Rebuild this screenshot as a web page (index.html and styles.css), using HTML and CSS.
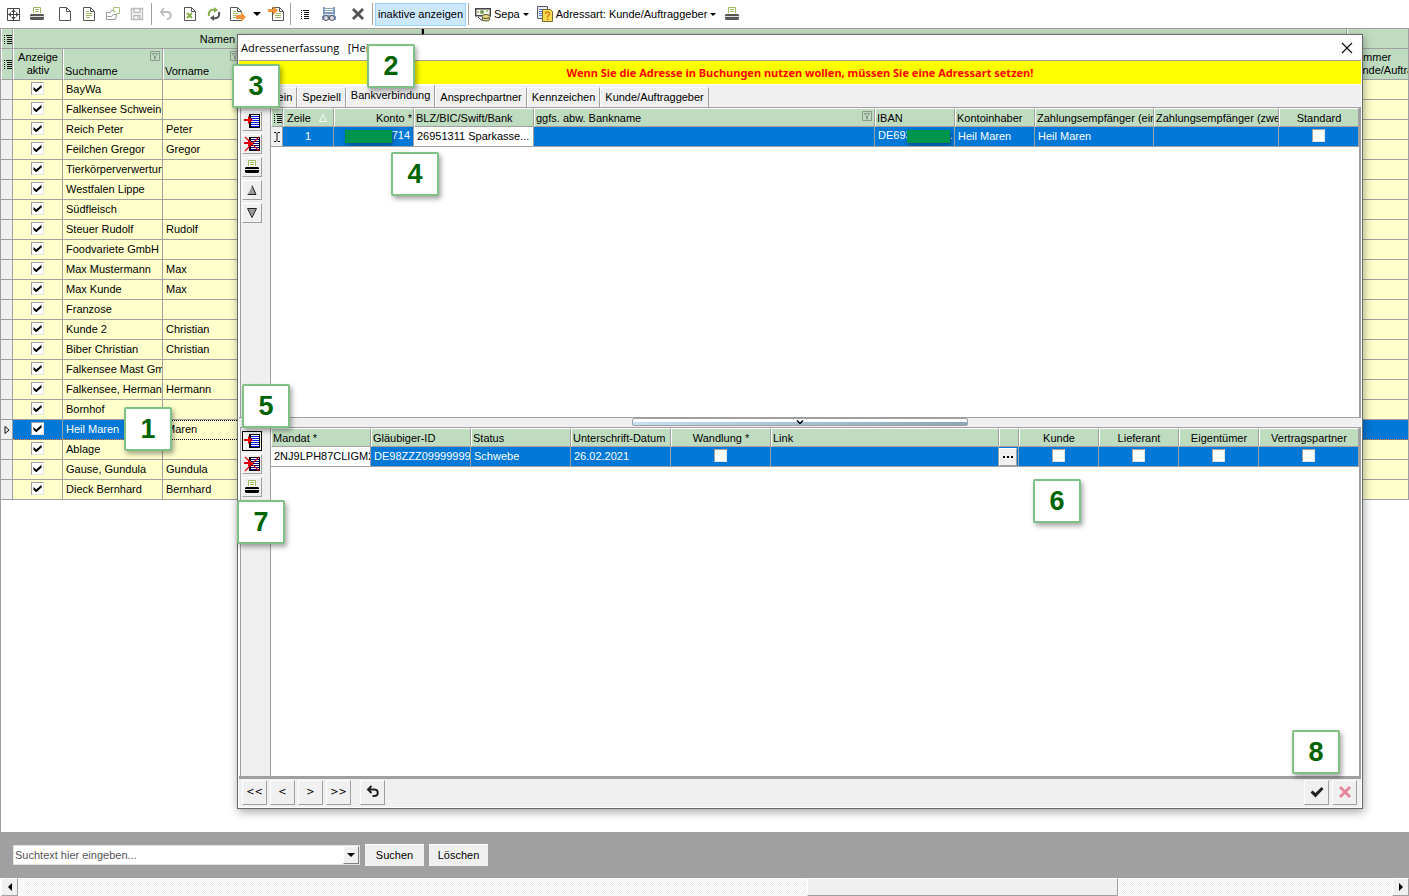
FILE: index.html
```html
<!DOCTYPE html>
<html lang="de">
  <head>
    <meta charset="UTF-8" />
    <title>Adressenerfassung</title>
    <link rel="stylesheet" href="styles.css">
  </head>
  <body>
    <svg class="sprite" aria-hidden="true">
      <symbol id="i-printer" viewBox="0 0 16 16">
        <path d="M4.500 7V1.500h7V7" fill="#fff" stroke="#9cb85c" />
        <path d="M6 3.500h4M6 5.500h4" stroke="#9cb85c" />
        <path d="M2 8h12l1 1v4l-1 1H2l-1-1V9z" fill="currentColor" />
        <path d="M1 10.500h14" stroke="#ddd" />
      </symbol>
      <symbol id="i-page" viewBox="0 0 16 16">
        <path d="M2.500 1.500h7l4 4v9h-11z M9.500 1.500v4h4" fill="#fff" stroke="#555" />
      </symbol>
      <symbol id="i-list" viewBox="0 0 16 16">
        <path d="M4 4.500h1M6 4.500h6M4 6.500h1M7 6.500h5M4 8.500h1M7 8.500h5M4 10.500h1M7 10.500h5M4 12.500h1M7 12.500h5" stroke="#111" />
      </symbol>
      <symbol id="i-insert" viewBox="0 0 16 16">
        <path d="M5 1h11v14H5z" fill="#000" />
        <path d="M7 2h8v12H7z" fill="#fff" />
        <path d="M7 3.500h8M7 5.500h8M7 7.500h8M7 9.500h8M7 11.500h8M7 13.500h8" stroke="#0010d0" />
        <path d="M0 6h4V3l5 4-5 4V8H0z" fill="#e00000" />
      </symbol>
      <symbol id="i-delete" viewBox="0 0 16 16">
        <path d="M5 1h11v14H5z" fill="#000" />
        <path d="M7 2h8v12H7z" fill="#fff" />
        <path d="M7 3.500h8M7 5.500h8M7 7.500h8M7 9.500h8M7 11.500h8M7 13.500h8" stroke="#000080" />
        <path d="M0 6h4V3l5 4-5 4V8H0z" fill="#e00000" />
        <path d="M1 1l14 14M15 1L1 15" stroke="#e00000" stroke-width="1.200" />
      </symbol>
      <symbol id="i-filter" viewBox="0 0 10 10">
        <path d="M.5.5h9v9h-9z M2 2.500h6L5.500 5v3h-1V5z" fill="none" stroke="#8c9a8c" />
      </symbol>
      <symbol id="i-cross" viewBox="0 0 16 16">
        <path d="M4 2l4 4 4-4 2 2-4 4 4 4-2 2-4-4-4 4-2-2 4-4-4-4z" fill="currentColor" />
      </symbol>
    </svg>

    <div class="toolbar">
      <button class="tool" title="Anpassen"><svg viewBox="0 0 16 16"><path d="M2.500 2.500h12v12h-12z M8.500 2v12M2 8.500h12" fill="none" stroke="#444" /><path d="M8.500 3.500L6 6h5zM8.500 13.500L6 11h5zM3.500 8.500L6 6v5zM13.500 8.500L11 6v5z" fill="#444" /></svg></button>
      <button class="tool" title="Drucken"><svg><use href="#i-printer" /></svg></button>
      <button class="tool first" title="Neu"><svg><use href="#i-page" /></svg></button>
      <button class="tool" title="Bearbeiten"><svg viewBox="0 0 16 16"><use href="#i-page" /><path d="M5 5.500h3M5 7.500h6M5 9.500h6M5 11.500h4" stroke="#9cb85c" /></svg></button>
      <button class="tool" title="Öffnen"><svg viewBox="0 0 16 16"><path d="M1.500 13.500v-7h4l1-2h2M1.500 13.500h9l1-5h-3l-2 2h-4" fill="none" stroke="#999" /><path d="M8.500 1.500h6v6h-3v2M8.500 1.500v4h2" fill="none" stroke="#a9bd7c" /></svg></button>
      <button class="tool" title="Speichern"><svg viewBox="0 0 16 16"><path d="M2.500 2.500h11v11h-11z M5 2.500v4h6v-4 M5 13.500v-4h6v4 M9 10.500v2" fill="none" stroke="#bbb" stroke-width="1.400" /></svg></button>
      <span class="sep"></span>
      <button class="tool" title="Rückgängig"><svg viewBox="0 0 16 16"><path d="M6 2L3 6l3 4M3 6h6c5 0 5 7 0 7" fill="none" stroke="#bbb" stroke-width="1.800" /></svg></button>
      <button class="tool" title="Löschen"><svg viewBox="0 0 16 16"><use href="#i-page" /><path d="M5 7l5 5M10 7l-5 5" stroke="#8ab04c" stroke-width="2" /></svg></button>
      <button class="tool" title="Aktualisieren"><svg viewBox="0 0 16 16"><path d="M3 10C2 5 5 3 9 4" fill="none" stroke="#8ab04c" stroke-width="2" /><path d="M8 1l4 3-4 3z" fill="#8ab04c" /><path d="M13 6c1 5-2 7-6 6" fill="none" stroke="#555" stroke-width="2" /><path d="M8 9l-4 3 4 3z" fill="#555" /></svg></button>
      <button class="tool" title="Export"><svg viewBox="0 0 16 16"><path d="M.5 1.500h7l4 4v9H.5z M7.500 1.500v4h4" fill="#fff" stroke="#555" /><path d="M3 5.500h3M3 7.500h5M3 9.500h4M3 11.500h3" stroke="#9cb85c" /><path d="M6 9h5V6l5 5-5 5v-3H6z" fill="#ef9438" /></svg></button>
      <button class="tool narrow" title="Mehr"><i class="caret"></i></button>
      <button class="tool" title="Import"><svg viewBox="0 0 16 16"><path d="M4.500 1.500h7l4 4v9h-11z M11.500 1.500v4h4" fill="#fff" stroke="#555" /><path d="M8 7.500h5M7 9.500h6M7 11.500h6" stroke="#9cb85c" /><path d="M0 3h5V0l5 4.500L5 9V6H0z" fill="#ef9438" /></svg></button>
      <span class="sep"></span>
      <button class="tool" title="Liste"><svg><use href="#i-list" /></svg></button>
      <button class="tool" title="Suchen"><svg viewBox="0 0 16 16"><path d="M2 1h12v9h1v4H1v-4h1z" fill="#7c9cc4" /><path d="M4 1h8v5H4z" fill="#fff" /><path d="M4 2.500h8M4 4.500h8" stroke="#8aa" /><path d="M3 8.500h10" stroke="#dde6f0" /><circle cx="5" cy="12" r="2.500" fill="#dde" stroke="#555" /><circle cx="11" cy="12" r="2.500" fill="#dde" stroke="#555" /></svg></button>
      <button class="tool dark apart" title="Schließen"><svg><use href="#i-cross" /></svg></button>
      <span class="sep"></span>
      <button class="tool-text active">inaktive anzeigen</button>
      <span class="sep"></span>
      <button class="tool-text"><svg viewBox="0 0 16 16"><path d="M.7 2.700h14.600v7H.7z" fill="#f1f6e8" stroke="#444" stroke-width="1.400" /><circle cx="7" cy="6" r="2" fill="#789a55" /><path d="M3 5v2M12 4v2" stroke="#789a55" /><path d="M3 11l3 3h3" fill="none" stroke="#444" /><ellipse cx="11" cy="13" rx="4" ry="2" fill="#e9dc7c" stroke="#554" /><ellipse cx="11" cy="10.500" rx="4" ry="2" fill="#e9dc7c" stroke="#554" /></svg>Sepa<i class="caret small"></i></button>
      <button class="tool-text"><svg viewBox="0 0 16 16"><path d="M.5.5h10v12H.5z" fill="#e7edf8" stroke="#556" /><path d="M2 3.500h7M2 5.500h7M2 7.500h3M2 9.500h3" stroke="#5a7fd0" /><path d="M5.500 3.500h8l2 2v10h-10z" fill="#f6dc50" stroke="#7a6a30" /><path d="M8.500 8c0-3 4-2.500 4 0 0 1.500-2 1.500-2 3.500M10.500 12.500v1.500" fill="none" stroke="#e07818" stroke-width="1.500" /></svg>Adressart: Kunde/Auftraggeber<i class="caret small"></i></button>
      <button class="tool" title="Liste drucken"><svg><use href="#i-printer" /></svg></button>
    </div>

    <div class="main">
      <table class="addresses">
        <colgroup>
          <col class="w12"><col class="w50"><col class="w100"><col class="w80"><col class="w179"><col><col class="w62">
        </colgroup>
        <thead>
          <tr class="groups">
            <th class="mark"><svg><use href="#i-list" /></svg></th>
            <th colspan="4">Namen</th>
            <th class="drop"></th>
            <th></th>
          </tr>
          <tr class="fields">
            <th class="mark"><svg><use href="#i-list" /></svg></th>
            <th>Anzeige<br>aktiv</th>
            <th class="low">Suchname<svg class="filter"><use href="#i-filter" /></svg></th>
            <th class="low">Vorname<svg class="filter"><use href="#i-filter" /></svg></th>
            <th></th>
            <th></th>
            <th class="left">Nummer<br>Kunde/Auftraggeber</th>
          </tr>
        </thead>
        <tbody id="addressRows"></tbody>
      </table>

      <section class="dialog" role="dialog" aria-labelledby="dialogTitle">
        <header class="titlebar">
          <span id="dialogTitle">Adressenerfassung &nbsp; [Heil]</span>
          <button class="close" aria-label="Schließen"><svg viewBox="0 0 12 12"><path d="M1 1l10 10M11 1L1 11" stroke="#111" stroke-width="1.200" /></svg></button>
        </header>
        <div class="warning">Wenn Sie die Adresse in Buchungen nutzen wollen, müssen Sie eine Adressart setzen!</div>
        <nav class="tabs">
          <button>Allgemein</button>
          <button>Speziell</button>
          <button class="current">Bankverbindung</button>
          <button>Ansprechpartner</button>
          <button>Kennzeichen</button>
          <button>Kunde/Auftraggeber</button>
        </nav>

        <div class="pane accounts">
          <div class="side">
            <button title="Einfügen"><svg><use href="#i-insert" /></svg></button>
            <button title="Entfernen"><svg><use href="#i-delete" /></svg></button>
            <button title="Drucken"><svg><use href="#i-printer" /></svg></button>
            <button title="Nach oben"><svg viewBox="0 0 16 16"><path d="M8 4l4 8H4z" fill="#999" /><path d="M8 3.500L12 12.500H3.500" fill="none" stroke="#222" /></svg></button>
            <button title="Nach unten"><svg viewBox="0 0 16 16"><path d="M8 12l4-8H4z" fill="#999" /><path d="M12.500 3.500H3.500L8 12.500z" fill="none" stroke="#222" /></svg></button>
          </div>
          <div class="sheet">
            <table class="grid">
              <colgroup>
                <col class="w12"><col class="w51"><col class="w80"><col class="w120"><col><col class="w80"><col class="w80"><col class="w119"><col class="w125"><col class="w80">
              </colgroup>
              <thead>
                <tr>
                  <th class="mark"><svg><use href="#i-list" /></svg></th>
                  <th class="indent">Zeile<svg class="sort" viewBox="0 0 8 8"><path d="M4 .5L7.500 7.500H.5z" fill="none" stroke="#f4faf4" /></svg></th>
                  <th class="right">Konto *</th>
                  <th>BLZ/BIC/Swift/Bank</th>
                  <th>ggfs. abw. Bankname<svg class="filter"><use href="#i-filter" /></svg></th>
                  <th>IBAN</th>
                  <th>Kontoinhaber</th>
                  <th>Zahlungsempfänger (einzeln)</th>
                  <th>Zahlungsempfänger (zweiter)</th>
                  <th class="center">Standard</th>
                </tr>
              </thead>
              <tbody>
                <tr>
                  <td class="mark"><svg viewBox="0 0 8 10"><path d="M1 .5h2l1 1 1-1h2M4 1.500v7M1 9.500h2l1-1 1 1h2" fill="none" stroke="#111" /></svg></td>
                  <td class="center">1</td>
                  <td class="right"><span class="redacted wide"></span>714</td>
                  <td class="edit">26951311 Sparkasse...</td>
                  <td></td>
                  <td>DE693<span class="redacted"></span>.</td>
                  <td>Heil Maren</td>
                  <td>Heil Maren</td>
                  <td></td>
                  <td class="center"><input type="checkbox" aria-label="Standard"></td>
                </tr>
              </tbody>
            </table>
          </div>
        </div>

        <div class="splitter"><button aria-label="Bereich einklappen"><svg viewBox="0 0 8 5"><path d="M1 .5l3 3 3-3" fill="none" stroke="#000" stroke-width="1.500" /></svg></button></div>

        <div class="pane mandates">
          <div class="side">
            <button class="focused" title="Einfügen"><svg><use href="#i-insert" /></svg></button>
            <button title="Entfernen"><svg><use href="#i-delete" /></svg></button>
            <button title="Drucken"><svg><use href="#i-printer" /></svg></button>
          </div>
          <div class="sheet">
            <table class="grid">
              <colgroup>
                <col class="w100"><col class="w100"><col class="w100"><col class="w100"><col class="w100"><col><col class="w20"><col class="w80"><col class="w80"><col class="w80"><col class="w100">
              </colgroup>
              <thead>
                <tr>
                  <th>Mandat *</th>
                  <th>Gläubiger-ID</th>
                  <th>Status</th>
                  <th>Unterschrift-Datum</th>
                  <th class="center">Wandlung *</th>
                  <th>Link</th>
                  <th></th>
                  <th class="center">Kunde</th>
                  <th class="center">Lieferant</th>
                  <th class="center">Eigentümer</th>
                  <th class="center">Vertragspartner</th>
                </tr>
              </thead>
              <tbody>
                <tr>
                  <td class="edit">2NJ9LPH87CLIGM2N</td>
                  <td>DE98ZZZ09999999999</td>
                  <td>Schwebe</td>
                  <td>26.02.2021</td>
                  <td class="center"><input type="checkbox" aria-label="Wandlung"></td>
                  <td></td>
                  <td class="pick"><button aria-label="Link auswählen"><svg viewBox="0 0 12 2"><path d="M1 0h2v2H1zM5 0h2v2H5zM9 0h2v2H9z" /></svg></button></td>
                  <td class="center"><input type="checkbox" aria-label="Kunde"></td>
                  <td class="center"><input type="checkbox" aria-label="Lieferant"></td>
                  <td class="center"><input type="checkbox" aria-label="Eigentümer"></td>
                  <td class="center"><input type="checkbox" aria-label="Vertragspartner"></td>
                </tr>
              </tbody>
            </table>
          </div>
        </div>

        <footer class="actions">
          <button>&lt;&lt;</button>
          <button>&lt;</button>
          <button>&gt;</button>
          <button>&gt;&gt;</button>
          <button class="undo" aria-label="Rückgängig"><svg viewBox="0 0 16 16"><path d="M6.500 2L3 5.500 6.500 9M3.500 5.500H9c5 0 5 6.500 0 6.500H7.500" fill="none" stroke="#222" stroke-width="2" /></svg></button>
          <button class="ok" aria-label="Übernehmen"><svg viewBox="0 0 16 16"><path d="M1.500 8.500l2-2L6.500 9l6-6 2 2-8 8.500z" fill="#222" /></svg></button>
          <button class="cancel" aria-label="Abbrechen"><svg><use href="#i-cross" /></svg></button>
        </footer>
      </section>

      <!-- Schrittnummern der Anleitung -->
      <div class="step step-1">1</div>
      <div class="step step-2">2</div>
      <div class="step step-3">3</div>
      <div class="step step-4">4</div>
      <div class="step step-5">5</div>
      <div class="step step-6">6</div>
      <div class="step step-7">7</div>
      <div class="step step-8">8</div>
    </div>

    <form class="search">
      <div class="combo">
        <input type="text" placeholder="Suchtext hier eingeben..." aria-label="Suchtext">
        <button type="button" aria-label="Verlauf"><i class="caret"></i></button>
      </div>
      <button type="button">Suchen</button>
      <button type="button">Löschen</button>
    </form>

    <div class="scrollbar">
      <button aria-label="Nach links"><svg viewBox="0 0 8 8"><path d="M6 0v8L2 4z" /></svg></button>
      <div class="track"><div class="thumb"></div></div>
      <button aria-label="Nach rechts"><svg viewBox="0 0 8 8"><path d="M2 0v8l4-4z" /></svg></button>
    </div>

    <script>
      const addresses = [
        ["BayWa", ""],
        ["Falkensee Schweinemast", ""],
        ["Reich Peter", "Peter"],
        ["Feilchen Gregor", "Gregor"],
        ["Tierkörperverwertung", ""],
        ["Westfalen Lippe", ""],
        ["Südfleisch", ""],
        ["Steuer Rudolf", "Rudolf"],
        ["Foodvariete GmbH", ""],
        ["Max Mustermann", "Max"],
        ["Max Kunde", "Max"],
        ["Franzose", ""],
        ["Kunde 2", "Christian"],
        ["Biber Christian", "Christian"],
        ["Falkensee Mast GmbH", ""],
        ["Falkensee, Hermann", "Hermann"],
        ["Bornhof", ""],
        ["Heil Maren", "Maren"],
        ["Ablage", ""],
        ["Gause, Gundula", "Gundula"],
        ["Dieck Bernhard", "Bernhard"],
      ];
      const selected = "Heil Maren";

      document.getElementById("addressRows").innerHTML = addresses
        .map(([name, first]) => {
          const sel = name === selected;
          const arrow = sel
            ? '<svg viewBox="0 0 8 10"><path d="M2 1.500l4 3.500-4 3.500z" fill="none" stroke="#111"/></svg>'
            : "";
          return `<tr${sel ? ' class="selected"' : ""}>
            <td class="mark">${arrow}</td>
            <td class="center"><input type="checkbox" checked aria-label="${name} aktiv"></td>
            <td>${name}</td>
            <td class="cell">${first}</td>
            <td></td><td></td><td></td>
          </tr>`;
        })
        .join("");
    </script>
  </body>
</html>
```
FILE: styles.css
```css
* {
  box-sizing: border-box;
}
body {
  margin: 0;
  height: 100vh;
  display: flex;
  flex-direction: column;
  overflow: hidden;
  background: #fff;
  color: #000;
  font: 11px/14px "Liberation Sans", Arial, sans-serif;
}
button,
input {
  font: inherit;
  color: inherit;
  padding: 0;
  margin: 0;
}
button {
  display: flex;
  align-items: center;
  justify-content: center;
  border: none;
  background: none;
}
svg {
  width: 16px;
  height: 16px;
  display: block;
  flex: none;
}
.sprite {
  display: none;
}

/* toolbar */
.toolbar {
  height: 28px;
  flex: none;
  display: flex;
  align-items: center;
  padding-left: 1px;
}
.tool {
  width: 24px;
  height: 24px;
  color: #555;
}
.tool.first {
  margin-left: 4px;
}
.tool.narrow {
  width: 14px;
}
.tool.apart {
  margin-left: 5px;
}
.sep {
  width: 1px;
  height: 22px;
  margin: 0 2px;
  background: #a0a0a0;
}
.caret {
  border: 4px solid transparent;
  border-top-color: #000;
  border-bottom: none;
}
.caret.small {
  border-width: 3px;
  border-bottom: none;
}
.tool-text {
  height: 23px;
  padding: 0 4px;
  gap: 3px;
  white-space: nowrap;
}
.tool-text.active {
  padding: 0 2px;
  background: #cce8ff;
  border: 1px solid #99d1ff;
}

/* tables */
.main {
  flex: 1;
  min-height: 0;
  position: relative;
  border-top: 1px solid #a0a0a0;
  border-left: 1px solid #a0a0a0;
}
table {
  width: 100%;
  table-layout: fixed;
  border-collapse: separate;
  border-spacing: 0;
}
.w12 { width: 12px; }
.w20 { width: 20px; }
.w50 { width: 50px; }
.w51 { width: 51px; }
.w62 { width: 62px; }
.w80 { width: 80px; }
.w100 { width: 100px; }
.w119 { width: 119px; }
.w120 { width: 120px; }
.w125 { width: 125px; }
.w179 { width: 179px; }
th,
td {
  overflow: hidden;
  white-space: nowrap;
  font-weight: normal;
  border-right: 1px solid #a0a0a0;
  border-bottom: 1px solid #a0a0a0;
}
th {
  position: relative;
  padding: 0 1px;
  background: #c0dcc0;
  text-align: left;
  border-left: 1px solid #fff;
  border-top: 1px solid #fff;
}
.addresses th {
  border-top: none;
  text-align: center;
}
.groups th {
  height: 20px;
}
.groups .drop {
  border-left: 2px solid #000;
}
.fields th {
  height: 31px;
  line-height: 13px;
}
.fields .low {
  padding-bottom: 1px;
  text-align: left;
  vertical-align: bottom;
}
.addresses .left {
  text-align: left;
}
.filter {
  position: absolute;
  top: 2px;
  right: 2px;
  width: 10px;
  height: 10px;
}
.sort {
  position: absolute;
  top: 5px;
  right: 6px;
  width: 8px;
  height: 8px;
}
.indent {
  padding-left: 3px;
}
td {
  height: 20px;
  padding: 0 3px 2px;
}
.addresses td {
  background: #ffffcc;
}
td.mark,
.addresses td.mark {
  background: #f0f0f0;
}
th.mark,
td.mark {
  padding: 0;
}
.mark svg {
  margin: 0 -2px;
}
td.mark svg {
  width: 8px;
  height: 10px;
  margin: 0 auto;
}
.center,
th.center {
  text-align: center;
}
.right,
th.right {
  text-align: right;
}
.addresses .selected td {
  background: #0078d7;
  color: #fff;
  border-bottom: 1px dotted #f0883a;
}
.addresses .selected .mark {
  background: #f0f0f0;
  border-bottom: 1px solid #a0a0a0;
}
.addresses .selected .cell {
  background: #ffffcc;
  color: #000;
  border-top: 1px dotted #000;
  border-bottom: 1px dotted #000;
}
input[type="checkbox"] {
  appearance: none;
  display: block;
  width: 13px;
  height: 13px;
  margin: 0 auto;
  background: #fff;
  border: 1px solid #a0a0a0;
  border-right-color: #e3e3e3;
  border-bottom-color: #e3e3e3;
}
input[type="checkbox"]:checked::after {
  content: "";
  display: block;
  width: 9px;
  height: 9px;
  margin: 1px;
  background: #000;
  clip-path: polygon(5% 34%, 36% 62%, 95% 8%, 95% 38%, 36% 92%, 5% 64%);
}

/* dialog */
.dialog {
  position: absolute;
  top: 5px;
  left: 236px;
  right: 46px;
  bottom: 23px;
  display: flex;
  flex-direction: column;
  padding: 0 1px 1px;
  background: #fff;
  border: 1px solid #6a6a6a;
  box-shadow: 1px 3px 9px rgba(0, 0, 0, 0.35);
}
.titlebar {
  height: 26px;
  flex: none;
  display: flex;
  align-items: center;
  justify-content: space-between;
  padding: 0 8px 0 2px;
  border-bottom: 1px solid #a0a0a0;
  font: 11px/16px "Open Sans", "Segoe UI", sans-serif;
}
.close svg {
  width: 12px;
  height: 12px;
}
.warning {
  height: 23px;
  flex: none;
  background: #ffff00;
  color: #ff0000;
  font: bold 11px/24px "Noto Sans", Tahoma, sans-serif;
  text-align: center;
}
.tabs {
  height: 23px;
  flex: none;
  display: flex;
  align-items: flex-end;
  border-top: 1px solid #fff;
  background: #f0f0f0;
}
.tabs button {
  height: 20px;
  padding: 0 4px 2px;
  border-top: 1px solid #fff;
  border-left: 1px solid #fff;
  border-right: 1px solid #a0a0a0;
}
.tabs .current {
  height: 22px;
  padding-bottom: 4px;
}
.pane {
  min-height: 0;
  display: flex;
  margin-left: 1px;
  border-top: 1px solid #a0a0a0;
  border-left: 1px solid #a0a0a0;
  border-right: 2px solid #a0a0a0;
}
.accounts {
  flex: 309;
}
.mandates {
  flex: 348;
}
.side {
  width: 30px;
  flex: none;
  padding: 3px 0 0 1px;
  display: flex;
  flex-direction: column;
  gap: 3px;
  background: #f0f0f0;
  border-right: 1px solid #a0a0a0;
}
.side button,
.actions button {
  width: 20px;
  height: 20px;
  background: #f0f0f0;
  border: 1px solid #fff;
  border-right-color: #a0a0a0;
  border-bottom-color: #a0a0a0;
}
.side .focused {
  border: 1px solid #000;
}
.sheet {
  flex: 1;
  min-width: 0;
}
.grid th {
  height: 19px;
}
.grid td {
  background: #0078d7;
  color: #fff;
}
.grid td.mark {
  background: #f0f0f0;
}
.grid .edit {
  background: #fff;
  color: #000;
}
.redacted {
  display: inline-block;
  width: 43px;
  height: 13px;
  margin-left: -5px;
  vertical-align: middle;
  background: #00964c;
  box-shadow: 1px 2px 4px rgba(0, 0, 0, 0.4);
  position: relative;
}
.redacted.wide {
  width: 47px;
}
.grid .pick {
  padding: 0;
}
.pick button {
  width: 18px;
  height: 18px;
  background: #f0f0f0;
  border: 1px solid #fff;
  border-right-color: #a0a0a0;
  border-bottom-color: #a0a0a0;
}
.pick svg {
  width: 12px;
  height: 2px;
}
.splitter {
  height: 10px;
  flex: none;
  display: flex;
  justify-content: center;
  background: #f0f0f0;
  border-top: 1px solid #a0a0a0;
}
.splitter button {
  width: 30%;
  height: 8px;
  border: 1px solid #a0a0a0;
  border-radius: 2px;
  background: linear-gradient(90deg, #c4e0f4, #8aa4b8);
  box-shadow: inset 0 3px #fff;
}
.splitter svg {
  width: 8px;
  height: 5px;
}
.actions {
  height: 31px;
  flex: none;
  display: flex;
  align-items: flex-start;
  gap: 3px;
  padding: 1px 4px 1px 3px;
  background: #f0f0f0;
  border-top: 3px solid #a0a0a0;
}
.actions button {
  width: 25px;
  height: 25px;
  padding-bottom: 1px;
  font-family: "DejaVu Sans Condensed", Tahoma, sans-serif;
}
.actions .undo {
  margin-left: 6px;
}
.actions .ok {
  margin-left: auto;
}
.actions .cancel {
  color: #e8849a;
}

/* step numbers */
.step {
  position: absolute;
  width: 48px;
  height: 44px;
  background: #fff;
  border: 2px solid #7fc084;
  border-radius: 2px;
  box-shadow: 2px 3px 5px rgba(0, 0, 0, 0.35);
  color: #006400;
  font-size: 27px;
  font-weight: bold;
  line-height: 40px;
  text-align: center;
}
.step-1 { left: 123px; top: 378px; }
.step-2 { left: 366px; top: 15px; }
.step-3 { left: 231px; top: 35px; }
.step-4 { left: 390px; top: 123px; }
.step-5 { left: 241px; top: 355px; }
.step-6 { right: 328px; top: 450px; }
.step-7 { left: 236px; top: 471px; }
.step-8 { right: 69px; bottom: 58px; }

/* search */
.search {
  height: 46px;
  flex: none;
  display: flex;
  align-items: center;
  gap: 5px;
  padding-left: 13px;
  background: #a0a0a0;
}
.combo {
  width: 347px;
  height: 20px;
  display: flex;
  background: #fff;
  border: 1px solid #e3e3e3;
}
.combo input {
  flex: 1;
  min-width: 0;
  border: none;
  outline: none;
  padding-left: 1px;
  background: none;
}
.combo input::placeholder {
  color: #555;
}
.search button {
  width: 59px;
  height: 22px;
  padding-bottom: 2px;
  background: #f0f0f0;
  border-top: 1px solid #fff;
}
.search .combo button {
  width: 16px;
  height: 18px;
  padding: 0;
  border: 1px solid #fff;
  border-right-color: #808080;
  border-bottom-color: #808080;
}

/* scrollbar */
.scrollbar {
  height: 18px;
  flex: none;
  display: flex;
  padding-left: 1px;
}
.scrollbar button,
.thumb {
  width: 17px;
  height: 18px;
  background: #f0f0f0;
  border: 1px solid #fff;
  border-right-color: #a0a0a0;
  border-bottom-color: #a0a0a0;
}
.scrollbar svg {
  width: 8px;
  height: 8px;
}
.track {
  flex: 1;
  display: grid;
  grid-template-columns: 789fr 311fr 274fr;
  background: repeating-conic-gradient(#fff 0 25%, #f0f0f0 0 50%) 0 0 / 2px 2px;
}
.thumb {
  grid-column: 2;
  width: auto;
}
```
